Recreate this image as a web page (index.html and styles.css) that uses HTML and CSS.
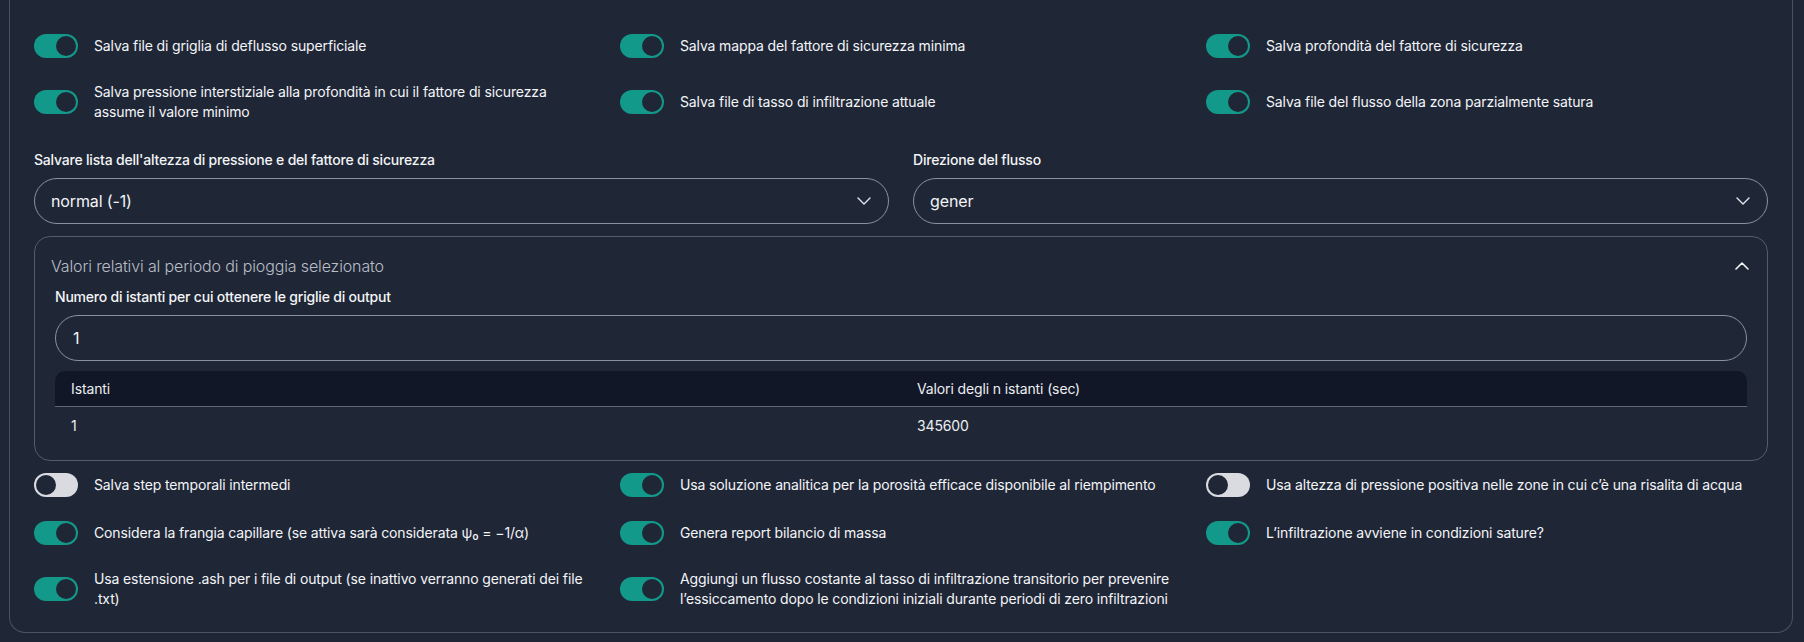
FILE: index.html
```html
<!DOCTYPE html>
<html lang="it">
<head>
<meta charset="utf-8">
<title>Impostazioni output</title>
<link rel="stylesheet" href="styles.css">
</head>
<body>
<div class="card">
  <div class="toggle-grid">
    <div class="opt"><span class="sw on"><span class="knob"></span></span><span class="txt">Salva file di griglia di deflusso superficiale</span></div>
    <div class="opt"><span class="sw on"><span class="knob"></span></span><span class="txt">Salva mappa del fattore di sicurezza minima</span></div>
    <div class="opt"><span class="sw on"><span class="knob"></span></span><span class="txt">Salva profondità del fattore di sicurezza</span></div>
    <div class="opt"><span class="sw on"><span class="knob"></span></span><span class="txt">Salva pressione interstiziale alla profondità in cui il fattore di sicurezza assume il valore minimo</span></div>
    <div class="opt"><span class="sw on"><span class="knob"></span></span><span class="txt">Salva file di tasso di infiltrazione attuale</span></div>
    <div class="opt"><span class="sw on"><span class="knob"></span></span><span class="txt">Salva file del flusso della zona parzialmente satura</span></div>
  </div>

  <div class="selects">
    <div class="field">
      <div class="label">Salvare lista dell'altezza di pressione e del fattore di sicurezza</div>
      <div class="select"><span>normal (-1)</span><svg class="chev" viewBox="0 0 14 8" width="14" height="8"><path d="M1 1l6 6 6-6" fill="none" stroke="#e5e7eb" stroke-width="1.4" stroke-linecap="round" stroke-linejoin="round"/></svg></div>
    </div>
    <div class="field">
      <div class="label">Direzione del flusso</div>
      <div class="select"><span>gener</span><svg class="chev" viewBox="0 0 14 8" width="14" height="8"><path d="M1 1l6 6 6-6" fill="none" stroke="#e5e7eb" stroke-width="1.4" stroke-linecap="round" stroke-linejoin="round"/></svg></div>
    </div>
  </div>

  <div class="accordion">
    <div class="acc-head">
      <span class="acc-title">Valori relativi al periodo di pioggia selezionato</span>
      <svg class="chev" viewBox="0 0 14 8" width="14" height="8"><path d="M1 7l6-6 6 6" fill="none" stroke="#f3f4f6" stroke-width="1.6" stroke-linecap="round" stroke-linejoin="round"/></svg>
    </div>
    <div class="acc-body">
      <div class="label">Numero di istanti per cui ottenere le griglie di output</div>
      <div class="input">1</div>
      <table class="tbl">
        <thead><tr><th>Istanti</th><th>Valori degli n istanti (sec)</th></tr></thead>
        <tbody><tr><td>1</td><td>345600</td></tr></tbody>
      </table>
    </div>
  </div>

  <div class="toggle-grid bottom">
    <div class="opt"><span class="sw"><span class="knob"></span></span><span class="txt">Salva step temporali intermedi</span></div>
    <div class="opt"><span class="sw on"><span class="knob"></span></span><span class="txt">Usa soluzione analitica per la porosità efficace disponibile al riempimento</span></div>
    <div class="opt"><span class="sw"><span class="knob"></span></span><span class="txt">Usa altezza di pressione positiva nelle zone in cui c’è una risalita di acqua</span></div>
    <div class="opt"><span class="sw on"><span class="knob"></span></span><span class="txt">Considera la frangia capillare (se attiva sarà considerata ψ₀ = −1/α)</span></div>
    <div class="opt"><span class="sw on"><span class="knob"></span></span><span class="txt">Genera report bilancio di massa</span></div>
    <div class="opt"><span class="sw on"><span class="knob"></span></span><span class="txt">L’infiltrazione avviene in condizioni sature?</span></div>
    <div class="opt"><span class="sw on"><span class="knob"></span></span><span class="txt">Usa estensione .ash per i file di output (se inattivo verranno generati dei file .txt)</span></div>
    <div class="opt"><span class="sw on"><span class="knob"></span></span><span class="txt">Aggiungi un flusso costante al tasso di infiltrazione transitorio per prevenire l’essiccamento dopo le condizioni iniziali durante periodi di zero infiltrazioni</span></div>
  </div>
</div>
</body>
</html>
```

FILE: styles.css
```css
* { box-sizing: border-box; }
html, body { margin: 0; padding: 0; }
body {
  background: #1f2737;
  font-family: Inter, "Noto Sans", sans-serif;
  color: #f1f2f4;
  font-size: 14px;
  line-height: 20px;
  letter-spacing: -0.13px;
}
.card {
  margin-left: 9px;
  width: 1784px;
  background: #1f2737;
  border: 1px solid #4b5362;
  border-top: 0;
  border-radius: 0 0 16px 16px;
  padding: 34px 24px 23px 24px;
}
.toggle-grid {
  display: grid;
  grid-template-columns: repeat(3, 1fr);
  column-gap: 24px;
  row-gap: 24px;
}
.toggle-grid.bottom { margin-top: 12px; }
.opt {
  display: flex;
  align-items: center;
  gap: 16px;
}
.sw {
  flex: none;
  width: 44px;
  height: 24px;
  border-radius: 12px;
  background: #d9dbe0;
  display: flex;
  align-items: center;
  padding: 0 2px;
}
.sw .knob {
  width: 20px;
  height: 20px;
  border-radius: 50%;
  background: #1f2737;
}
.sw.on { background: #13998a; justify-content: flex-end; }
.txt { color: #f4f5f7; }

.selects {
  margin-top: 28px;
  display: grid;
  grid-template-columns: 1fr 1fr;
  column-gap: 24px;
}
.label {
  font-weight: 500;
  letter-spacing: -0.2px;
  color: #f3f4f6;
  margin-bottom: 8px;
}
.select {
  height: 46px;
  border: 1px solid #8b919d;
  border-radius: 23px;
  display: flex;
  align-items: center;
  justify-content: space-between;
  padding: 0 17px 0 16px;
  font-size: 16px;
  color: #f3f4f6;
}
.accordion {
  margin-top: 12px;
  border: 1px solid #545c6c;
  border-radius: 16px;
}
.acc-head {
  display: flex;
  align-items: center;
  justify-content: space-between;
  padding: 17px 18px 9px 16px;
  line-height: 24px;
}
.acc-title {
  font-size: 16px;
  font-weight: 300;
  color: #b9bdc6;
}
.acc-body { padding: 0 20px 15px 20px; }
.input {
  height: 46px;
  border: 1px solid #8b919d;
  border-radius: 23px;
  display: flex;
  align-items: center;
  padding: 0 17px;
  font-size: 16px;
  color: #f3f4f6;
}
.tbl {
  margin-top: 10px;
  width: 100%;
  border-collapse: separate;
  border-spacing: 0;
  table-layout: fixed;
}
.tbl th {
  background: #111726;
  text-align: left;
  font-weight: 400;
  color: #eceef1;
  height: 36px;
  padding: 0 16px;
  border-bottom: 1px solid #5f6675;
}
.tbl th:first-child { border-top-left-radius: 10px; }
.tbl th:last-child { border-top-right-radius: 10px; }
.tbl td {
  height: 38px;
  padding: 0 16px;
  color: #eceef1;
}
```
